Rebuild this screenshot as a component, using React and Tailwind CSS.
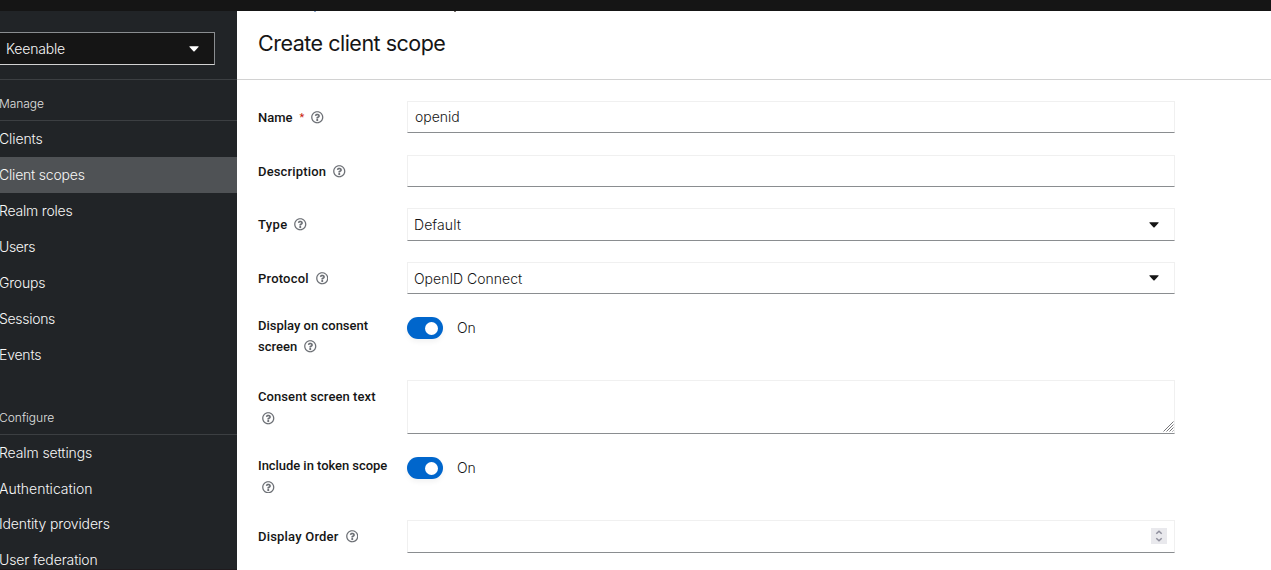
const HELP_PATH =
  "M256 8C119.043 8 8 119.083 8 256c0 136.997 111.043 248 248 248s248-111.003 248-248C504 119.083 392.957 8 256 8zm0 448c-110.532 0-200-89.431-200-200 0-110.495 89.472-200 200-200 110.491 0 200 89.471 200 200 0 110.530-89.431 200-200 200zm107.244-255.200c0 67.052-72.421 68.084-72.421 92.863V300c0 6.627-5.373 12-12 12h-45.647c-6.627 0-12-5.373-12-12v-8.659c0-35.745 27.100-50.034 47.579-61.516 17.561-9.845 28.324-16.541 28.324-29.579 0-17.246-21.999-28.693-39.784-28.693-23.189 0-33.894 10.977-48.942 29.969-4.057 5.120-11.460 6.071-16.666 2.124l-27.824-21.098c-5.107-3.872-6.251-11.066-2.644-16.363C184.846 131.491 214.940 112 261.794 112c49.071 0 101.450 38.304 101.450 88.800zM298 368c0 23.159-18.841 42-42 42s-42-18.841-42-42 18.841-42 42-42 42 18.841 42 42z";

function Help({ className = "" }) {
  return (
    <svg viewBox="0 0 512 512" className={`inline-block size-[12.5px] shrink-0 fill-[#6a6e73] stroke-[#6a6e73] stroke-[4] ${className}`}>
      <path d={HELP_PATH} />
    </svg>
  );
}

function Caret({ className = "" }) {
  return (
    <svg viewBox="0 0 10 6" className={`h-[6px] w-[10px] shrink-0 ${className}`}>
      <path d="M0.8 0.3h8.4q.8.1.3.8L5.6 5.3q-.6.6-1.2 0L.5 1.1Q0 .4.8.3z" fill="currentColor" />
    </svg>
  );
}

function NavItem({ label, className = "tracking-[-0.2px]", active }) {
  return (
    <div className={`flex min-h-0 flex-1 items-center whitespace-nowrap text-[14px] font-light text-[#f8f8f8] ${active ? "bg-[#4f5255]" : ""}`}>
      <span className={`-ml-px ${className}`}>{label}</span>
    </div>
  );
}

function Row({ className, label, children }) {
  return (
    <div className={`flex shrink-0 items-start ${className}`}>
      <div className="w-[149px] shrink-0 whitespace-nowrap font-['Roboto',sans-serif] text-[13px] font-medium leading-[21px] text-[#151515]">
        {label}
      </div>
      {children}
    </div>
  );
}

const field = "w-[768px] shrink-0 border border-[#f0f0f0] border-b-[#8a8d90] bg-white text-[14px] font-light text-[#151515]";

function Toggle() {
  return (
    <div className="flex items-center">
      <div className="flex h-[22px] w-9 items-center justify-end rounded-full bg-[#0066cc] pr-[5px] shadow-[0_3px_5px_rgba(0,0,0,0.05)]">
        <div className="size-[13px] rounded-full bg-white" />
      </div>
      <span className="ml-[14px] text-[14px] font-light leading-[22px] text-[#151515]">On</span>
    </div>
  );
}

export default function App() {
  return (
    <div className="flex h-[570px] w-[1271px] flex-col overflow-hidden bg-white font-['Inter',sans-serif]">
      <div className="h-[11px] shrink-0 bg-[#151515]" />
      <div className="flex min-h-0 flex-1">
        <nav className="flex w-[237px] shrink-0 flex-col overflow-hidden border-b border-[#1f1a1d] bg-[#212427]">
          <div className="h-[69px] shrink-0 border-b border-[#3c3f42] pt-[21px]">
            <div className="flex h-[33px] w-[215px] items-center justify-between border border-l-0 border-[#8a8d90] border-b-[#d2d2d2] bg-[#151515] pl-[6px] pr-[15px] text-[14px] font-light text-[#f8f8f8]">
              <span className="tracking-[-0.2px]">Keenable</span>
              <Caret className="text-white" />
            </div>
          </div>
          <div className="flex h-[41px] shrink-0 items-center border-b border-[#3c3f42] pt-[8px] text-[12px] font-light text-[#e0e0e0]">
            <span className="-ml-px tracking-[-0.05px]">Manage</span>
          </div>
          <div className="flex h-[251px] shrink-0 flex-col">
            <NavItem label="Clients" className="tracking-[-0.1px]" />
            <NavItem label="Client scopes" active />
            <NavItem label="Realm roles" />
            <NavItem label="Users" className="tracking-[-0.35px]" />
            <NavItem label="Groups" />
            <NavItem label="Sessions" className="tracking-[-0.3px]" />
            <NavItem label="Events" />
          </div>
          <div className="flex h-[63px] shrink-0 items-end border-b border-[#3c3f42] pb-[7px] text-[12px] font-light text-[#e0e0e0]">
            <span className="-ml-px">Configure</span>
          </div>
          <div className="flex h-[142px] shrink-0 flex-col">
            <NavItem label="Realm settings" className="tracking-[-0.1px]" />
            <NavItem label="Authentication" className="tracking-normal" />
            <NavItem label="Identity providers" className="tracking-[-0.13px]" />
            <NavItem label="User federation" className="tracking-[-0.12px]" />
          </div>
        </nav>
        <main className="flex min-w-0 flex-1 flex-col">
          <header className="flex h-[69px] shrink-0 flex-col border-b border-[#d2d2d2] pl-[21px]">
            <div className="flex h-px shrink-0">
              <div className="ml-[56px] h-px w-[2px] bg-[#8fa9cf]" />
              <div className="ml-[138px] h-px w-[2px] bg-[#77706c]" />
            </div>
            <h1 className="mt-[16px] whitespace-nowrap text-[21.5px] leading-[31px] tracking-[-0.5px] text-[#151515]">
              Create client scope
            </h1>
          </header>
          <form className="flex flex-col pl-[21px] pt-[21px]">
            <Row
              className="h-[54px]"
              label={
                <div className="flex items-center pt-[6px]">
                  <span>Name</span>
                  <span className="ml-[7px] text-[11px] font-normal text-[#c9190b]">*</span>
                  <Help className="ml-[7px]" />
                </div>
              }
            >
              <div className={`${field} flex h-8 items-center pb-px pl-[7px]`}><span>openid</span></div>
            </Row>
            <Row
              className="h-[53px]"
              label={<div className="flex items-center pt-[6px]"><span className="tracking-[0.15px]">Description</span><Help className="ml-[7px]" /></div>}
            >
              <div className={`${field} h-8`} />
            </Row>
            <Row
              className="h-[54px]"
              label={<div className="flex items-center pt-[6px]"><span className="tracking-[0.35px]">Type</span><Help className="ml-[7px]" /></div>}
            >
              <div className={`${field} flex h-[33px] items-center justify-between pl-[6px] pr-[15px]`}>
                <span className="tracking-[0.08px]">Default</span>
                <Caret className="text-[#151515]" />
              </div>
            </Row>
            <Row
              className="h-[55px]"
              label={<div className="flex items-center pt-[6px]"><span className="tracking-[0.2px]">Protocol</span><Help className="ml-[7px]" /></div>}
            >
              <div className={`${field} flex h-8 items-center justify-between pl-[6px] pr-[15px]`}>
                <span>OpenID Connect</span>
                <Caret className="text-[#151515]" />
              </div>
            </Row>
            <Row
              className="h-[63px]"
              label={
                <div className="-mt-[2px]">
                  <div>Display on consent</div>
                  <div className="flex items-center"><span>screen</span><Help className="ml-[7px]" /></div>
                </div>
              }
            >
              <Toggle />
            </Row>
            <Row
              className="h-[77px]"
              label={
                <div className="pt-[6px]">
                  <div className="tracking-[0.08px]">Consent screen text</div>
                  <div className="flex h-[23px] items-center"><Help className="ml-1" /></div>
                </div>
              }
            >
              <div className={`${field} flex h-[54px] items-end justify-end`}>
                <svg viewBox="0 0 11 11" className="mb-px size-[11px]" stroke="#77777a" strokeWidth="1" fill="none">
                  <path d="M0.500 10.500L10.500 0.500M3.500 10.500L10.500 3.500M6.500 10.500L10.500 6.500M9.500 10.500L10.500 9.500" />
                </svg>
              </div>
            </Row>
            <Row
              className="h-[63px]"
              label={
                <div className="-mt-[2px]">
                  <div className="tracking-[-0.05px]">Include in token scope</div>
                  <div className="flex h-[22px] items-center"><Help className="ml-1" /></div>
                </div>
              }
            >
              <Toggle />
            </Row>
            <Row
              className="h-[50px]"
              label={<div className="flex items-center pt-[6px]"><span className="tracking-[0.2px]">Display Order</span><Help className="ml-[7px]" /></div>}
            >
              <div className={`${field} flex h-[33px] items-start justify-end pr-[7px] pt-[7px]`}>
                <div className="flex size-4 flex-col items-center justify-center bg-[#e9e9ed]">
                  <svg viewBox="0 0 16 16" className="size-4" fill="none" stroke="#8f8f9d" strokeWidth="1.5">
                    <path d="M5.300 5.800L8 3.200l2.700 2.600M5.300 10.200L8 12.800l2.700-2.600" />
                  </svg>
                </div>
              </div>
            </Row>
          </form>
        </main>
      </div>
    </div>
  );
}
